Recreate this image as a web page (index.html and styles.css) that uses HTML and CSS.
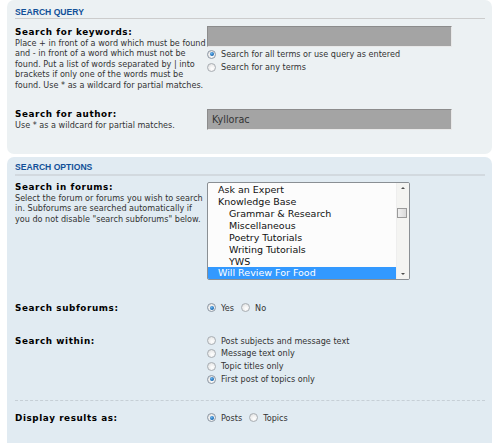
FILE: index.html
```html
<!DOCTYPE html>
<html>
<head>
<meta charset="utf-8">
<link rel="stylesheet" href="styles.css">
</head>
<body>
<div class="panel panel-query">
  <h3 class="heading heading-query">Search query</h3>
  <div class="row row-keywords">
    <div class="dt">
      <div class="label">Search for keywords:</div>
      <div class="explain">Place + in front of a word which must be found and - in front of a word which must not be found. Put a list of words separated by | into brackets if only one of the words must be found. Use * as a wildcard for partial matches.</div>
    </div>
    <div class="dd">
      <div class="inputbox"></div>
      <div class="options options-keywords">
        <div class="opt"><span class="radio checked"></span>Search for all terms or use query as entered</div>
        <div class="opt"><span class="radio"></span>Search for any terms</div>
      </div>
    </div>
  </div>
  <div class="row row-author">
    <div class="dt">
      <div class="label">Search for author:</div>
      <div class="explain">Use * as a wildcard for partial matches.</div>
    </div>
    <div class="dd">
      <div class="inputbox inputbox-author">Kyllorac</div>
    </div>
  </div>
</div>

<div class="panel panel-options">
  <h3 class="heading heading-options">Search options</h3>
  <div class="row row-forums">
    <div class="dt">
      <div class="label">Search in forums:</div>
      <div class="explain explain-forums">Select the forum or forums you wish to search in. Subforums are searched automatically if you do not disable "search subforums" below.</div>
    </div>
    <div class="dd">
      <div class="listbox">
        <div class="list">
          <div class="item">Ask an Expert</div>
          <div class="item">Knowledge Base</div>
          <div class="item sub">Grammar &amp; Research</div>
          <div class="item sub">Miscellaneous</div>
          <div class="item sub">Poetry Tutorials</div>
          <div class="item sub">Writing Tutorials</div>
          <div class="item sub">YWS</div>
          <div class="item selected">Will Review For Food</div>
        </div>
        <div class="scrollbar">
          <div class="arrow arrow-up"></div>
          <div class="track"><div class="thumb"></div></div>
          <div class="arrow arrow-down"></div>
        </div>
      </div>
    </div>
  </div>
  <div class="row row-subforums">
    <div class="dt"><div class="label">Search subforums:</div></div>
    <div class="dd">
      <div class="inline">
        <span class="radio checked"></span><span class="txt">Yes</span>
        <span class="radio"></span><span class="txt">No</span>
      </div>
    </div>
  </div>
  <div class="row row-within">
    <div class="dt"><div class="label">Search within:</div></div>
    <div class="dd">
      <div class="options options-within">
        <div class="opt"><span class="radio"></span>Post subjects and message text</div>
        <div class="opt"><span class="radio"></span>Message text only</div>
        <div class="opt"><span class="radio"></span>Topic titles only</div>
        <div class="opt"><span class="radio checked"></span>First post of topics only</div>
      </div>
    </div>
  </div>
  <div class="separator"></div>
  <div class="row row-display">
    <div class="dt"><div class="label">Display results as:</div></div>
    <div class="dd">
      <div class="inline">
        <span class="radio checked"></span><span class="txt">Posts</span>
        <span class="radio"></span><span class="txt">Topics</span>
      </div>
    </div>
  </div>
</div>
</body>
</html>
```

FILE: styles.css
```css
html, body {
  margin: 0;
  padding: 0;
  background: #ffffff;
}
body {
  padding: 0 7px;
  font-family: "DejaVu Sans", Verdana, sans-serif;
  font-size: 8.1px;
  color: #333333;
  overflow: hidden;
  height: 443px;
}
.panel {
  width: 485px;
  box-sizing: border-box;
  padding: 0 7px 0 8px;
  border-radius: 7px;
}
.panel-query {
  background: #ECF1F3;
  padding-bottom: 23px;
}
.panel-options {
  background: #E1EBF2;
  margin-top: 3px;
  height: 300px;
}
.heading {
  margin: 0;
  font-family: "Liberation Sans", Arial, sans-serif;
  font-weight: bold;
  font-size: 8.6px;
  line-height: 12px;
  text-transform: uppercase;
  color: #115098;
  border-bottom: 1px solid #CCCCCC;
}
.heading-query {
  padding-top: 6px;
}
.heading-options {
  padding-top: 4px;
  border-bottom: 2px solid #D2D9DF;
  line-height: 13px;
}
.row {
  display: flex;
}
.dt {
  width: 192px;
  flex: none;
}
.dd {
  flex: 1;
}
.label {
  font-weight: bold;
  font-size: 8.8px;
  letter-spacing: 0.6px;
  color: #000000;
  line-height: 12px;
}
.explain {
  line-height: 10.5px;
  padding-right: 1px;
}
.row-keywords {
  margin-top: 7px;
}
.row-keywords .explain {
  margin-top: -0.5px;
}
.row-author {
  margin-top: 18px;
}
.inputbox {
  width: 245px;
  height: 21px;
  box-sizing: border-box;
  background: #A4A4A4;
  border: 1px solid;
  border-color: #8C8C8C #E8E8E8 #E8E8E8 #8C8C8C;
  font-size: 9.6px;
  line-height: 19px;
  color: #333333;
  padding-left: 4px;
}
.inputbox-author {
  margin-top: 1px;
}
.options-keywords {
  margin-top: 0.5px;
}
.opt {
  display: flex;
  align-items: center;
  line-height: 13px;
}
.options-within .opt {
  line-height: 12.75px;
}
.radio {
  display: inline-block;
  width: 9px;
  height: 9px;
  box-sizing: border-box;
  border-radius: 50%;
  border: 1px solid #A9AEB3;
  background: radial-gradient(circle at 60% 65%, #FFFFFF 0, #EDEDED 55%, #D2D4D6 100%);
  margin-right: 5px;
  flex: none;
  position: relative;
}
.radio.checked {
  border-color: #8E98A4;
}
.radio.checked::after {
  content: "";
  position: absolute;
  left: 1.5px;
  top: 1.5px;
  width: 4px;
  height: 4px;
  border-radius: 50%;
  background: radial-gradient(circle at 40% 35%, #6FB8F0 0, #1E6FB8 60%, #10508C 100%);
}
.row-forums {
  margin-top: 5px;
}
.listbox {
  margin-top: 1px;
  width: 203px;
  height: 98px;
  box-sizing: border-box;
  border: 1px solid #8A8F94;
  border-radius: 2px;
  background: #FCFCFC;
  display: flex;
  overflow: hidden;
}
.list {
  flex: 1;
  padding-top: 1px;
  font-size: 9.5px;
  color: #111111;
}
.item {
  height: 12px;
  line-height: 12px;
  padding-left: 10px;
  white-space: nowrap;
}
.item.sub {
  padding-left: 21px;
}
.item.selected {
  background: #3399FF;
  color: #FFFFFF;
  margin-top: -0.5px;
}
.scrollbar {
  width: 12px;
  flex: none;
  display: flex;
  flex-direction: column;
  background: #F4F4F2;
  border-left: 1px solid #EEEEEE;
}
.arrow {
  height: 12px;
  flex: none;
  position: relative;
}
.arrow::after {
  content: "";
  position: absolute;
  left: 4px;
  width: 0;
  height: 0;
  border-left: 2px solid transparent;
  border-right: 2px solid transparent;
}
.arrow-up::after {
  top: 4px;
  border-bottom: 2px solid #4D4D4D;
}
.arrow-down::after {
  top: 6px;
  border-top: 2px solid #4D4D4D;
}
.track {
  flex: 1;
  padding-top: 13px;
}
.thumb {
  width: 10px;
  height: 10px;
  box-sizing: border-box;
  border: 1px solid #9A9A9A;
  background: linear-gradient(to right, #F0F0F0, #DADADA);
}
.row-subforums {
  margin-top: 22px;
}
.inline {
  display: flex;
  align-items: center;
  line-height: 12px;
}
.inline .txt {
  margin-right: 7px;
}
.row-within {
  margin-top: 21px;
}
.separator {
  margin-top: 14px;
  border-top: 1px dashed #C6CFD6;
}
.row-display {
  margin-top: 11px;
}
```
